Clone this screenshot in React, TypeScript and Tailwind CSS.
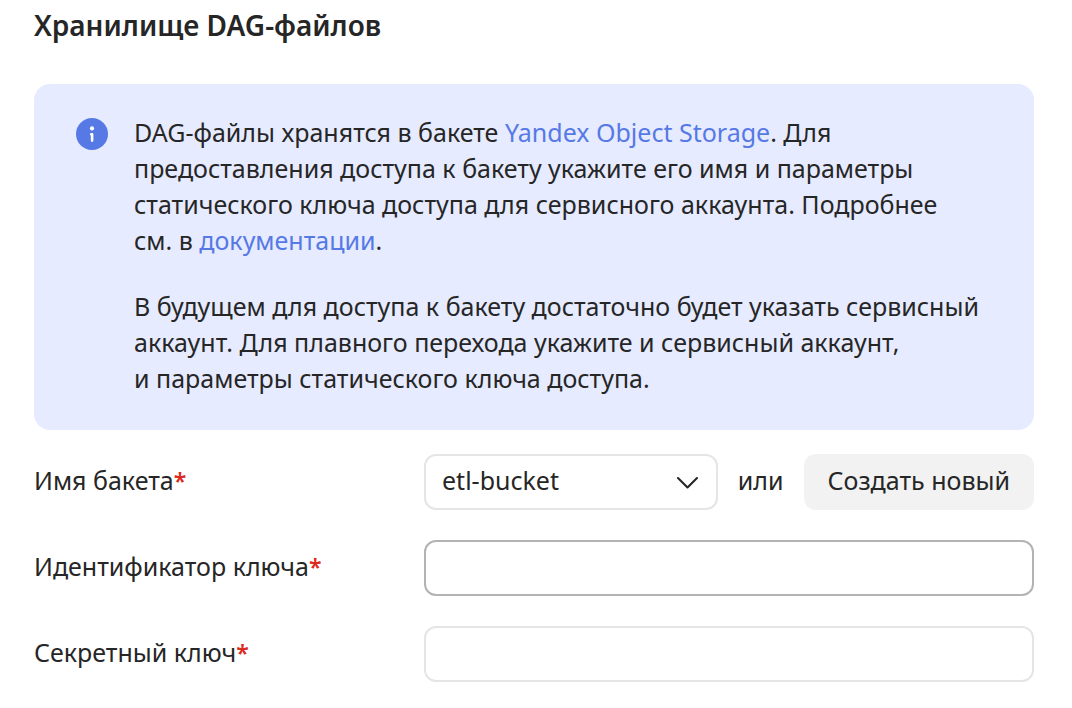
import React from "react";

function Star() {
  return <span className="text-[23px] font-semibold text-[#dc2a1e]">*</span>;
}

const label = "w-[390px] shrink-0 pb-1";
const link = "text-[#5679e6]";

export default function App() {
  return (
    <main className="min-h-screen bg-white pt-[7px] pr-[38px] pl-[34px] font-['Noto_Sans',sans-serif] text-[#262626]">
      <h2 className="text-[28px] leading-9 font-semibold">Хранилище DAG-файлов</h2>
      <section className="mt-[41px] flex gap-[26px] rounded-2xl bg-[#e6ebff] pt-[30px] pr-10 pb-[34px] pl-[42px] text-[25px] leading-9">
        <svg className="mt-1 size-8 shrink-0" viewBox="0 0 32 32" aria-hidden="true">
          <circle cx="16" cy="16" r="16" fill="#5679e6" />
          <circle cx="16" cy="10.4" r="2.1" fill="#fff" />
          <path d="M15.2 16.2h.9v6.4" fill="none" stroke="#fff" strokeWidth="2.6" strokeLinecap="round" strokeLinejoin="round" />
        </svg>
        <div className="min-w-0 flex-1">
          <p>
            DAG-файлы хранятся в бакете <a href="#storage" className={link}>Yandex Object Storage</a>. Для<br />
            предоставления доступа к бакету укажите его имя и параметры<br />
            статического ключа доступа для сервисного аккаунта. Подробнее<br />
            см. в <a href="#docs" className={link}>документации</a>.
          </p>
          <p className="mt-[30px]">
            В будущем для доступа к бакету достаточно будет указать сервисный<br />
            аккаунт. Для плавного перехода укажите и сервисный аккаунт,<br />
            и параметры статического ключа доступа.
          </p>
        </div>
      </section>
      <form className="mt-6 flex flex-col gap-[30px] pb-6 text-[25px] leading-9">
        <div className="flex items-center">
          <label htmlFor="bucket" className={label}>Имя бакета<Star /></label>
          <div className="relative min-w-0 flex-1">
            <select id="bucket" className="block h-14 w-full appearance-none rounded-xl border-2 border-[#e5e5e5] bg-white px-4 pb-1">
              <option>etl-bucket</option>
            </select>
            <svg className="pointer-events-none absolute top-4 right-[18px] size-6" viewBox="0 0 24 24" fill="none" stroke="#262626" strokeWidth="2.1" strokeLinecap="round" strokeLinejoin="round" aria-hidden="true">
              <path d="M2 8l9.5 9.5L21 8" />
            </svg>
          </div>
          <span className="mx-5 pb-1">или</span>
          <button type="button" className="h-14 rounded-xl bg-[#f2f2f2] px-6 pb-1">Создать новый</button>
        </div>
        <div className="flex items-center">
          <label htmlFor="key-id" className={label}>Идентификатор ключа<Star /></label>
          <input id="key-id" type="text" className="h-14 min-w-0 flex-1 rounded-xl border-2 border-[#b3b3b3] px-4 outline-none" />
        </div>
        <div className="flex items-center">
          <label htmlFor="secret" className={label}>Секретный ключ<Star /></label>
          <input id="secret" type="text" className="h-14 min-w-0 flex-1 rounded-xl border-2 border-[#e5e5e5] px-4 outline-none" />
        </div>
      </form>
    </main>
  );
}
